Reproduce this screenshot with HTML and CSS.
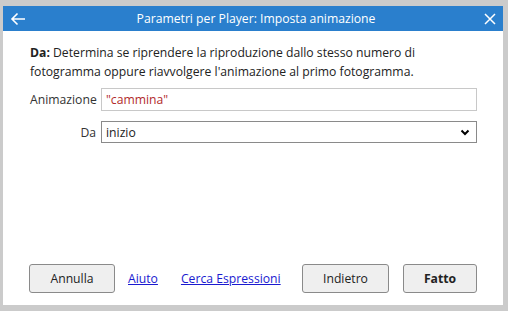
FILE: index.html
```html
<!DOCTYPE html>
<html>
<head>
<meta charset="utf-8">
<link rel="stylesheet" href="styles.css">
</head>
<body>
<div class="dialog">
  <div class="titlebar">
    <svg class="back" width="16" height="14" viewBox="0 0 16 14"><path d="M15 7H2M7.5 1.5L2 7l5.5 5.5" fill="none" stroke="#fff" stroke-width="1.6"/></svg>
    <div class="title">Parametri per Player: Imposta animazione</div>
    <svg class="close" width="12" height="12" viewBox="0 0 12 12"><path d="M1 1l10 10M11 1L1 11" fill="none" stroke="#fff" stroke-width="1.5"/></svg>
  </div>
  <div class="content">
    <p class="desc"><b>Da:</b> Determina se riprendere la riproduzione dallo stesso numero di fotogramma oppure riavvolgere l'animazione al primo fotogramma.</p>
    <div class="form">
      <label class="lbl">Animazione</label>
      <div class="input">"cammina"</div>
      <label class="lbl">Da</label>
      <div class="select"><span>inizio</span><svg width="10" height="7" viewBox="0 0 10 7"><path d="M1.5 1.5L5 5l3.5-3.5" fill="none" stroke="#000" stroke-width="2"/></svg></div>
    </div>
  </div>
  <div class="footer">
    <button class="btn">Annulla</button>
    <a class="link">Aiuto</a>
    <a class="link">Cerca Espressioni</a>
    <span class="spacer"></span>
    <button class="btn">Indietro</button>
    <button class="btn bold">Fatto</button>
  </div>
</div>
</body>
</html>
```
FILE: styles.css
```css
html, body { margin: 0; padding: 0; }
body {
  background: #cbcbcb;
  width: 508px;
  height: 311px;
  padding: 6px 5px 6px 3px;
  box-sizing: border-box;
  font-family: "Open Sans", "Noto Sans", sans-serif;
  font-size: 12.2px;
  color: #222;
}
.dialog {
  width: 500px;
  height: 299px;
  background: #fff;
  display: flex;
  flex-direction: column;
}
.titlebar {
  height: 25px;
  background: #2a7fcd;
  display: flex;
  align-items: center;
  color: #fff;
  padding: 0 7px;
}
.back { flex: none; margin-top: 1px; }
.title { flex: 1; text-align: center; font-size: 12.2px; margin-left: 2px; }
.close { flex: none; }
.content { padding: 12px 26px 0 27px; }
.desc { margin: 0; line-height: 19px; color: #222; }
.desc b { font-weight: 700; }
.form {
  display: grid;
  grid-template-columns: 66px 376px;
  column-gap: 5px;
  row-gap: 10px;
  margin-top: 7px;
  align-items: center;
}
.lbl { text-align: right; color: #333; }
.input, .select {
  border: 1px solid #c8c8c8;
  box-sizing: border-box;
  height: 23px;
  padding: 0 4px;
  display: flex;
  align-items: center;
}
.input { color: #b22b2b; }
.select { border-color: #8a8a8a; height: 22px; justify-content: space-between; color: #222; }
.select svg { margin-right: 2px; }
.footer {
  margin-top: auto;
  display: flex;
  align-items: center;
  padding: 0 26px 12px 26px;
}
.btn {
  font-family: inherit;
  font-size: 12.2px;
  height: 29px;
  width: 87px;
  background: #efefef;
  border: 1px solid #8a8a8a;
  border-radius: 3px;
  color: #222;
  padding: 0;
}
.btn:first-child { width: 86px; }
.btn.bold { width: 74px; font-weight: 700; margin-left: 14px; }
.link { color: #1a1ad0; text-decoration: underline; margin-left: 13px; }
.link + .link { margin-left: 23px; }
.spacer { flex: 1; }
```
